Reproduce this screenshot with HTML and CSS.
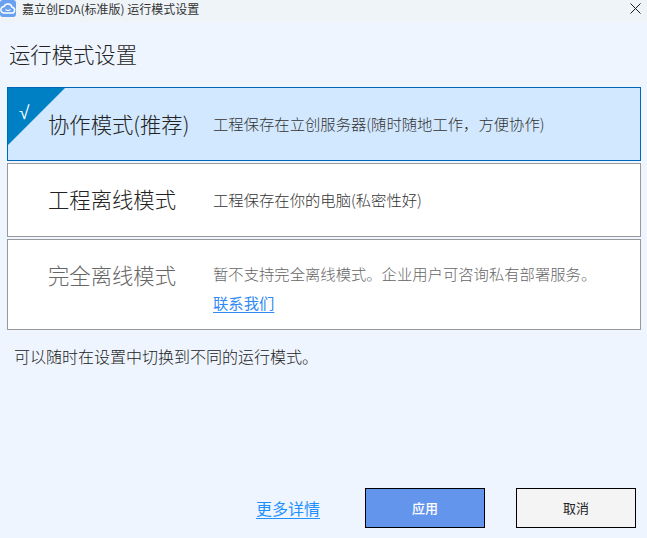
FILE: index.html
```html
<!DOCTYPE html>
<html lang="zh-CN">
<head>
<meta charset="utf-8">
<title>运行模式设置</title>
<link rel="stylesheet" href="styles.css">
</head>
<body>
<div class="window">
  <header class="titlebar">
    <svg class="app-icon" width="16" height="18" viewBox="0 0 16 18">
      <rect x="0" y="0" width="16" height="17" fill="#6aa0f0" rx="3"/>
      <path d="M4.2 13h7.3a2.9 2.9 0 0 0 .5-5.8 4.2 4.2 0 0 0-8-.6A3.2 3.2 0 0 0 4.2 13z" fill="none" stroke="#fff" stroke-width="1.5"/>
      <path d="M5.5 9.5q2.5 2 5 0" fill="none" stroke="#fff" stroke-width="1.2"/>
    </svg>
    <span class="titlebar-text">嘉立创EDA(标准版) 运行模式设置</span>
    <svg class="close" width="11" height="11" viewBox="0 0 11 11"><path d="M.5.5l10 10M10.5.5l-10 10" stroke="#1a1a1a" stroke-width="1" fill="none"/></svg>
  </header>
  <main class="content">
    <h1 class="heading">运行模式设置</h1>
    <div class="cards">
      <section class="card card-active">
        <span class="corner"></span>
        <span class="check">√</span>
        <h2 class="card-title">协作模式(推荐)</h2>
        <p class="card-desc">工程保存在立创服务器(随时随地工作，方便协作)</p>
      </section>
      <section class="card">
        <h2 class="card-title">工程离线模式</h2>
        <p class="card-desc">工程保存在你的电脑(私密性好)</p>
      </section>
      <section class="card card-disabled">
        <h2 class="card-title">完全离线模式</h2>
        <div class="card-desc">
          <p class="desc-line">暂不支持完全离线模式。企业用户可咨询私有部署服务。</p>
          <a class="contact" href="#">联系我们</a>
        </div>
      </section>
    </div>
    <p class="note">可以随时在设置中切换到不同的运行模式。</p>
    <footer class="actions">
      <a class="more" href="#">更多详情</a>
      <button class="btn btn-primary">应用</button>
      <button class="btn">取消</button>
    </footer>
  </main>
</div>
</body>
</html>
```
FILE: styles.css
```css
* { box-sizing: border-box; }
html, body { margin: 0; height: 100%; }
body {
  font-family: "Noto Sans CJK SC", "Noto Sans", sans-serif;
  font-weight: 300;
  background: #eef5fe;
  color: #333;
  overflow: hidden;
}
.window { width: 647px; height: 538px; display: flex; flex-direction: column; }
.titlebar {
  height: 22px;
  background: #eff4f8;
  display: flex;
  align-items: flex-start;
  flex: none;
}
.app-icon { flex: none; width: 16px; height: 18px; }
.titlebar-text { font-size: 12px; font-weight: 400; color: #333; margin-left: 6px; line-height: 18px; }
.close { margin-left: auto; margin-right: 6px; margin-top: 3px; }
.content { flex: 1; display: flex; flex-direction: column; padding: 0 6px 0 7px; }
.heading { margin: 17px 0 0 2px; font-size: 21.33px; font-weight: 300; line-height: 30px; height: 48px; color: #222; }
.cards { display: flex; flex-direction: column; gap: 2px; }
.card {
  position: relative;
  height: 74px;
  background: #fff;
  border: 1px solid #999;
  display: flex;
  align-items: center;
  padding-left: 40px;
}
.card-active { background: #d2e8fe; border-color: #0066b8; }
.card-disabled { height: 91px; align-items: flex-start; padding-top: 20px; }
.corner {
  position: absolute;
  left: 0; top: 0;
  width: 57px; height: 57px;
  background: #0080c4;
  clip-path: polygon(0 0, 100% 0, 0 100%);
}
.check { position: absolute; left: 11px; top: 12px; color: #fff; font: 300 19px/24px "Noto Sans", sans-serif; }
.card-title { margin: 0; width: 165px; padding-bottom: 2px; font-size: 21.33px; font-weight: 300; line-height: 30px; color: #222; flex: none; white-space: nowrap; }
.card-active .card-title { padding-bottom: 0; }
.card-desc { margin: 0; padding-bottom: 2px; font-size: 15.33px; line-height: 22px; color: #333; }
.card-active .card-desc { padding-bottom: 3px; }
.card-disabled .card-title { color: #666; }
.card-disabled .card-desc { color: #666; padding-bottom: 0; }
.desc-line { margin: 0 0 4px; line-height: 27px; }
.contact { color: #2f8af5; font-weight: 400; text-decoration: underline; text-underline-offset: 3px; display: block; white-space: nowrap; line-height: 22px; }
.note { margin: 15px 0 0 7px; font-size: 16px; line-height: 22px; color: #222; }
.actions { margin-top: auto; margin-bottom: 10px; display: flex; align-items: center; }
.more { margin-left: 249px; font-size: 16px; font-weight: 400; line-height: 24px; color: #1e90ff; text-decoration: underline; text-underline-offset: 3px; }
.btn {
  width: 120px; height: 40px;
  margin-left: 31px;
  border: 1px solid #000;
  background: #f4f4f4;
  color: #222;
  font: 400 13px "Noto Sans CJK SC", sans-serif;
  padding: 0 0 2px;
}
.btn-primary { margin-left: 45px; background: #6495ed; color: #fff; font-weight: 500; }
```
